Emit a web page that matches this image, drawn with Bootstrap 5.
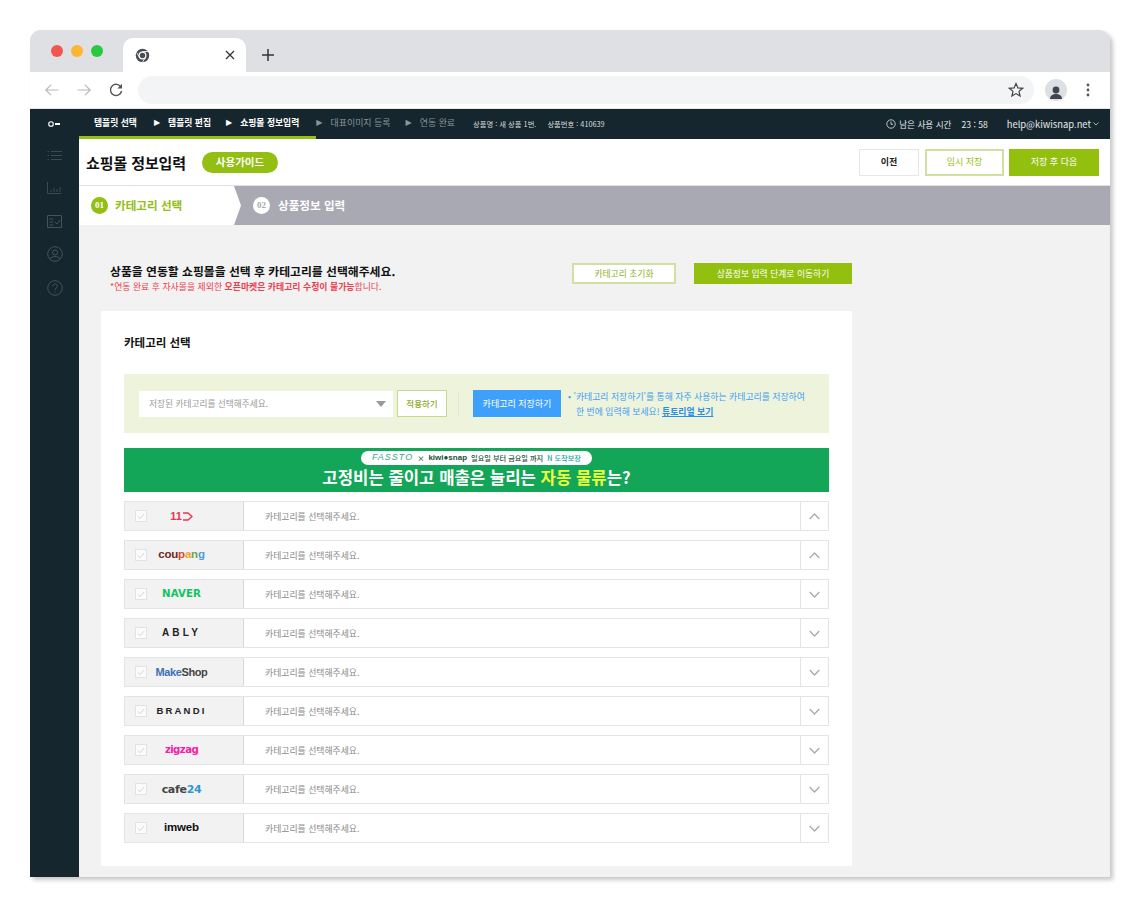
<!DOCTYPE html>
<html lang="ko">
<head>
<meta charset="utf-8">
<title>쇼핑몰 정보입력</title>
<link href="https://cdn.jsdelivr.net/npm/bootstrap@5.3.0/dist/css/bootstrap.min.css" rel="stylesheet">
<style>
html,body{background:#fff;margin:0;height:907px;overflow:hidden}
body{font-family:"Noto Sans CJK KR","Noto Sans",sans-serif;color:#111}
.win{margin:30px 0 0 30px;width:1080px;height:847px;box-shadow:3px 3px 4px rgba(0,0,0,.22);border-radius:11px 11px 0 0;overflow:hidden;background:#f2f2f2}
.tabbar{height:42px;background:#dfe0e4;padding-top:8px}
.lights{width:93px;padding:7px 0 0 21px;gap:8px}
.lights i{display:block;width:12px;height:12px;border-radius:50%}
.ctab{width:123px;height:34px;background:#fff;border-radius:10px 10px 0 0;padding:0 11px 0 12px}
.plus{margin-left:16px;width:12px;height:34px}
.tbar{height:37px;background:#fff;padding:4px 0 5px 15px;border-bottom:1px solid #e8e8ea}
.addr{width:896px;height:28px;background:#f3f4f5;border-radius:14px;margin-left:15px;padding-right:10px}
.avatar{width:22px;height:22px;border-radius:50%;background:#dcdfe4;overflow:hidden;margin-left:11px}
.dark{height:30px;background:#16262e;color:#fff;font-size:8.8px;font-weight:700;padding-right:11px}
.keyc{width:49px}
.stp{height:30px;padding:0 0 0 17px;gap:8px;border-bottom:3px solid #93c00f}
.stp.first{padding-left:15px}
.stp.third{padding-left:15px;padding-right:17px}
.stp.off{border-bottom-color:transparent;color:#8a9499;font-weight:400;font-size:8.95px}
.stp.fourth{padding-left:0}
.stp.fifth{padding-left:15px}
.tri{font-size:8px;line-height:1;font-family:"DejaVu Sans",sans-serif}
.infos{font-size:7.3px;font-weight:400;color:#d8dcde;margin-left:18px;gap:11px}
.topr{font-weight:400;color:#e6e9ea;font-size:8.6px}
.mailx{margin-left:19px;font-size:9.4px}
.side{width:49px;background:#16262e;height:738px;padding-top:9px}
.main{width:1031px;height:738px;overflow:hidden}
.hdr{height:47px;background:#fff;padding:0 11px 0 7px;border-bottom:1px solid #e3e3e3}
.ttl{font-size:15px;font-weight:700;margin:0 16px 0 0;line-height:1;letter-spacing:-.1px}
.pill{background:#93be12;color:#fff;font-size:10.5px;font-weight:700;height:21px;width:76px;border-radius:11px}
.bt{font-size:9px;height:27px;display:flex;align-items:center;justify-content:center;padding:0;border-radius:0}
.bt-w{width:60px;background:#fff;border:1px solid #e6e6e6;color:#222;font-weight:700}
.bt-o{width:79px;background:#fff;border:2px solid #cfe0a0;color:#93be12;margin:0 5px 0 6px}
.bt-g{width:90px;background:#93c00f;color:#fff;border:0}
.stepbar{height:39px;background:#a9a9b3;color:#fff}
.st1{width:162px;height:39px;background:#fff;clip-path:polygon(0 0,155px 0,162px 50%,155px 100%,0 100%);padding-left:12px;color:#93be12;font-size:11.6px;font-weight:700}
.num{width:17px;height:17px;border-radius:50%;font-size:9px;font-weight:700;display:flex;align-items:center;justify-content:center;margin-right:7px;font-family:"Liberation Serif",serif}
.n1{background:#93be12;color:#fff}
.n2{background:#fff;color:#a9a9b3;margin-right:8px}
.st2{padding-left:12px;font-size:11.6px;font-weight:700}
.body-area{width:751px;margin-left:22px;padding-top:36px}
.toprow{height:50px;padding-left:9px}
.h1a{font-size:11.85px;font-weight:700;line-height:20px;margin:0}
.h1b{font-size:8.9px;color:#ef3d4e;line-height:11px;margin:0}
.tb{height:21px;font-size:8.8px;display:flex;align-items:center;justify-content:center;padding:0;border-radius:0;margin-top:2px}
.tb-o{width:104px;background:#fff;border:2px solid #cfe0a0;color:#8fb028;margin-right:18px}
.tb-g{width:158px;background:#93c00f;color:#fff;border:0}
.panel{background:#fff;height:555px;padding:23px 23px 0}
.ptitle{font-size:11.5px;font-weight:700;line-height:17px;margin:0 0 23px}
.savebox{height:59px;background:#eef4dc;padding:0 15px;margin-bottom:15px}
.sel{width:254px;height:26px;background:#fff;font-size:8.7px;color:#999;padding:0 7px 0 10px}
.caret{width:0;height:0;border-left:5px solid transparent;border-right:5px solid transparent;border-top:6px solid #999}
.apply{width:50px;height:27px;background:#fff;border:1.5px solid #c7d98c;color:#8fa828;font-size:8.5px;font-weight:500;display:flex;align-items:center;justify-content:center;margin-left:4px;padding:0;border-radius:0}
.vsep{width:1px;height:26px;background:#e2e8cf;margin:0 14px 0 11px}
.blue{width:88px;height:27px;background:#3fa0fb;color:#fff;font-size:9px;display:flex;align-items:center;justify-content:center;padding:0;border:0;border-radius:0;margin-right:7px}
.hint{font-size:8.85px;color:#3d9df5;line-height:15px;margin:0}
.hint a{color:#2b8fe8;font-weight:700}
.hint span{padding-left:8px}
.banner{height:44px;background:#13a659;color:#fff;margin-bottom:9px;padding-top:3px}
.bpill{height:14px;width:231px;background:#fff;border-radius:7px;font-size:7.2px;color:#1b4f3a;font-weight:500;gap:4px;margin:0 auto}
.bpill b{font-family:"Liberation Sans",sans-serif;font-weight:700;font-size:8px}
.e1{font-style:italic;color:#39a88a;letter-spacing:1px;font-size:9px;font-family:"Liberation Sans",sans-serif}
.bh{font-size:16.7px;font-weight:700;line-height:25px;text-align:center;margin:0}
.bh em{font-style:normal;color:#eaff3a}
.rw{height:30px;margin-bottom:9px;border:1px solid #e4e4e4;background:#fff}
.lc{width:119px;height:28px;background:#f2f2f2;border-right:1px solid #d8d8d8;padding-left:10px;flex:none}
.cb{width:12px;height:12px;background:#fbfbfb;border:1px solid #e2e2e2;flex:none}
.logo{width:65px;text-align:center;margin-left:2px;line-height:1;font-family:"Liberation Sans",sans-serif;font-weight:700;white-space:nowrap}
.ph{flex:1;font-size:8.85px;color:#8a8a8a;padding:1px 0 0 21px}
.rc{width:28px;height:28px;border-left:1px solid #e4e4e4;flex:none}
.l11{color:#e8384f;font-size:11px}
.lcp{font-size:11.5px;color:#6b2a22;letter-spacing:-.2px}
.lcp u{text-decoration:none;color:#d9492f}.lcp s{text-decoration:none;color:#e9a23b}.lcp q{quotes:none;color:#6ba83c}.lcp var{font-style:normal;color:#4c9fd6}
.lnv{color:#10c463;font-size:10.2px;font-weight:700;letter-spacing:.1px;font-family:"DejaVu Sans",sans-serif}
.lab{color:#222;font-size:10px;letter-spacing:3.2px}
.lmk{color:#3f6fba;font-size:11px;letter-spacing:-.4px}.lmk span{color:#444}
.lbr{color:#222;font-size:9.5px;letter-spacing:2.2px}
.lzz{color:#f021a6;font-size:10.2px;font-family:"DejaVu Sans",sans-serif;letter-spacing:-.6px}
.lc24{color:#444;font-size:11px;font-family:"DejaVu Sans",sans-serif;letter-spacing:-.3px}.lc24 span{color:#2f97d4}
.lim{color:#111;font-size:11.5px;letter-spacing:-.2px}
</style>
</head>
<body>
<div class="win">
  <div class="tabbar d-flex">
    <div class="lights d-flex"><i style="background:#f4554f"></i><i style="background:#fdb62f"></i><i style="background:#27c93f"></i></div>
    <div class="ctab d-flex align-items-center justify-content-between">
      <svg width="15" height="15" viewBox="0 0 16 16"><circle cx="8" cy="8" r="7.2" fill="#4a4e52"/><circle cx="8" cy="8" r="4.2" fill="#fff"/><circle cx="8" cy="8" r="2.9" fill="#4a4e52"/><path d="M8 3.8h6.400M5.200 10.600 1.900 5M10.900 10.600 7.600 15.600" stroke="#fff" stroke-width=".9" fill="none"/></svg>
      <svg width="10" height="10" viewBox="0 0 10 10"><path d="M1 1l8 8M9 1l-8 8" stroke="#333" stroke-width="1.3"/></svg>
    </div>
    <div class="plus d-flex align-items-center"><svg width="12" height="12" viewBox="0 0 12 12"><path d="M6 0v12M0 6h12" stroke="#333" stroke-width="1.5"/></svg></div>
  </div>
  <div class="tbar d-flex align-items-center">
    <svg width="14" height="12" viewBox="0 0 14 12"><path d="M13.5 6H1M6 .8.8 6 6 11.2" stroke="#b4b7bb" stroke-width="1.2" fill="none"/></svg>
    <svg style="margin-left:18px" width="14" height="12" viewBox="0 0 14 12"><path d="M.5 6H13M8 .8 13.2 6 8 11.2" stroke="#b4b7bb" stroke-width="1.2" fill="none"/></svg>
    <svg style="margin-left:18px" width="14" height="14" viewBox="0 0 14 14"><path d="M12 4.200A5.600 5.600 0 1 0 12.600 8" stroke="#555" stroke-width="1.400" fill="none"/><path d="M13 .8v4.600H8.400z" fill="#555"/></svg>
    <div class="addr d-flex align-items-center justify-content-end">
      <svg width="16" height="16" viewBox="0 0 16 16"><path d="M8 1.600l1.900 4.300 4.700.4-3.600 3.100 1.100 4.600L8 11.600 3.900 14l1.100-4.600L1.400 6.300l4.700-.4z" stroke="#444" stroke-width="1.200" fill="none"/></svg>
    </div>
    <div class="avatar"><svg width="22" height="22" viewBox="0 0 22 22"><circle cx="11" cy="8" r="3.400" fill="#3f4650"/><path d="M5 17c0-3.400 2.700-5 6-5s6 1.600 6 5z" fill="#3f4650"/></svg></div>
    <svg style="margin-left:19px" width="4" height="14" viewBox="0 0 4 14"><circle cx="2" cy="2" r="1.400" fill="#555"/><circle cx="2" cy="7" r="1.400" fill="#555"/><circle cx="2" cy="12" r="1.400" fill="#555"/></svg>
  </div>
  <div class="dark d-flex align-items-center">
    <div class="keyc d-flex justify-content-center"><svg width="13" height="8" viewBox="0 0 13 8"><circle cx="3" cy="4" r="2.300" fill="none" stroke="#fff" stroke-width="1.100"/><path d="M7 4h5" stroke="#fff" stroke-width="2"/></svg></div>
    <div class="stp first d-flex align-items-center">템플릿 선택</div>
    <div class="stp d-flex align-items-center"><span class="tri">▶</span>템플릿 편집</div>
    <div class="stp third d-flex align-items-center"><span class="tri">▶</span>쇼핑몰 정보입력</div>
    <div class="stp off fourth d-flex align-items-center"><span class="tri">▶</span>대표이미지 등록</div>
    <div class="stp off fifth d-flex align-items-center"><span class="tri">▶</span>연동 완료</div>
    <div class="infos d-flex"><span>상품명 : 새 상품 1번.</span><span>상품번호 : 410639</span></div>
    <div class="topr ms-auto d-flex align-items-center">
      <svg width="10" height="10" viewBox="0 0 10 10" style="margin-right:3px"><circle cx="5" cy="5" r="4.200" fill="none" stroke="#e6e9ea" stroke-width=".8"/><path d="M5 2.500V5.300H7" stroke="#e6e9ea" stroke-width=".8" fill="none"/></svg>
      <span>남은 사용 시간</span><span style="margin-left:10px">23 : 58</span><span class="mailx">help@kiwisnap.net</span>
      <svg width="6" height="4" viewBox="0 0 6 4" style="margin-left:2px"><path d="M.5.500 3 3 5.500.500" stroke="#cfd4d6" stroke-width=".8" fill="none"/></svg>
    </div>
  </div>
  <div class="d-flex">
    <div class="side d-flex flex-column align-items-center">
      <svg width="15" height="15" viewBox="0 0 15 15"><path d="M4 3.500h11M4 7.500h11M4 11.500h11M.5 3.500h1.500M.5 7.500h1.500M.5 11.500h1.500" stroke="#3c4a51" stroke-width="1" fill="none"/></svg>
      <svg width="15" height="17" viewBox="0 0 15 17" style="margin-top:16px"><path d="M.5 3v11.500h14M4 13v-2M7 13V9M10 13v-3M13 13V8" stroke="#3c4a51" stroke-width="1" fill="none"/></svg>
      <svg width="15" height="16" viewBox="0 0 15 14" style="margin-top:18px"><path d="M.5.500h14v12H.5zM2.500 4H6M2.500 7H6M2.500 10H6M8 7l2 2 3-4" stroke="#465359" stroke-width="1" fill="none"/></svg>
      <svg width="16" height="16" viewBox="0 0 16 16" style="margin-top:16px"><circle cx="8" cy="8" r="7.300" fill="none" stroke="#465359"/><circle cx="8" cy="6.500" r="2.500" fill="none" stroke="#465359"/><path d="M3 12.500c2-2.500 8-2.500 10 0" fill="none" stroke="#465359"/></svg>
      <svg width="16" height="16" viewBox="0 0 16 16" style="margin-top:18px"><circle cx="8" cy="8" r="7.300" fill="none" stroke="#465359"/><path d="M5.800 6.200c0-3 4.500-3 4.500 0 0 1.800-2.300 1.800-2.300 3.800M8 11.300v1.200" fill="none" stroke="#465359"/></svg>
    </div>
    <div class="main">
      <div class="hdr d-flex align-items-center">
        <h1 class="ttl">쇼핑몰 정보입력</h1>
        <div class="pill d-flex align-items-center justify-content-center">사용가이드</div>
        <div class="ms-auto d-flex">
          <button class="btn bt bt-w">이전</button><button class="btn bt bt-o">임시 저장</button><button class="btn bt bt-g">저장 후 다음</button>
        </div>
      </div>
      <div class="stepbar d-flex">
        <div class="st1 d-flex align-items-center"><span class="num n1">01</span>카테고리 선택</div>
        <div class="st2 d-flex align-items-center"><span class="num n2">02</span>상품정보 입력</div>
      </div>
      <div class="body-area">
        <div class="toprow d-flex align-items-start justify-content-between">
          <div><p class="h1a">상품을 연동할 쇼핑몰을 선택 후 카테고리를 선택해주세요.</p><p class="h1b">*연동 완료 후 자사몰을 제외한 <b>오픈마켓은 카테고리 수정이 불가능</b>합니다.</p></div>
          <div class="d-flex"><button class="btn tb tb-o">카테고리 초기화</button><button class="btn tb tb-g">상품정보 입력 단계로 이동하기</button></div>
        </div>
        <div class="panel">
          <h2 class="ptitle">카테고리 선택</h2>
          <div class="savebox d-flex align-items-center">
            <div class="sel d-flex align-items-center justify-content-between"><span>저장된 카테고리를 선택해주세요.</span><i class="caret"></i></div>
            <button class="btn apply">적용하기</button>
            <i class="vsep"></i>
            <button class="btn blue">카테고리 저장하기</button>
            <p class="hint">• '카테고리 저장하기'를 통해 자주 사용하는 카테고리를 저장하여<br><span>한 번에 입력해 보세요! <a href="#">튜토리얼 보기</a></span></p>
          </div>
          <div class="banner">
            <div class="bpill d-flex align-items-center justify-content-center"><span class="e1">FASSTO</span><span>×</span><b>kiwi●snap</b><span>일요일 부터 금요일 까지</span><span style="color:#1aa5a0">N 도착보장</span></div>
            <p class="bh">고정비는 줄이고 매출은 늘리는 <em>자동 물류</em>는?</p>
          </div>

          <div class="rw d-flex align-items-center"><div class="lc d-flex align-items-center"><span class="cb d-flex align-items-center justify-content-center"><svg width="8" height="7" viewBox="0 0 8 7"><path d="M.8 3.500 3 5.700 7.200 1" stroke="#d4d4d4" fill="none"/></svg></span><span class="logo l11">11<svg width="11" height="9" viewBox="0 0 11 9"><path d="M1 1h5l4 3.500L6 8H1" stroke="#e8384f" stroke-width="1.400" fill="none"/></svg></span></div><div class="ph">카테고리를 선택해주세요.</div><div class="rc d-flex align-items-center justify-content-center"><svg width="11" height="7" viewBox="0 0 11 7"><path d="M.7 6 5.500 1l4.800 5" stroke="#aaa" stroke-width="1.300" fill="none"/></svg></div></div>

          <div class="rw d-flex align-items-center"><div class="lc d-flex align-items-center"><span class="cb d-flex align-items-center justify-content-center"><svg width="8" height="7" viewBox="0 0 8 7"><path d="M.8 3.500 3 5.700 7.200 1" stroke="#d4d4d4" fill="none"/></svg></span><span class="logo lcp">cou<u>p</u><s>a</s><q>n</q><var>g</var></span></div><div class="ph">카테고리를 선택해주세요.</div><div class="rc d-flex align-items-center justify-content-center"><svg width="11" height="7" viewBox="0 0 11 7"><path d="M.7 6 5.500 1l4.800 5" stroke="#aaa" stroke-width="1.300" fill="none"/></svg></div></div>

          <div class="rw d-flex align-items-center"><div class="lc d-flex align-items-center"><span class="cb d-flex align-items-center justify-content-center"><svg width="8" height="7" viewBox="0 0 8 7"><path d="M.8 3.500 3 5.700 7.200 1" stroke="#d4d4d4" fill="none"/></svg></span><span class="logo lnv">NAVER</span></div><div class="ph">카테고리를 선택해주세요.</div><div class="rc d-flex align-items-center justify-content-center"><svg width="11" height="7" viewBox="0 0 11 7"><path d="M.7 1 5.500 6l4.800-5" stroke="#aaa" stroke-width="1.300" fill="none"/></svg></div></div>

          <div class="rw d-flex align-items-center"><div class="lc d-flex align-items-center"><span class="cb d-flex align-items-center justify-content-center"><svg width="8" height="7" viewBox="0 0 8 7"><path d="M.8 3.500 3 5.700 7.200 1" stroke="#d4d4d4" fill="none"/></svg></span><span class="logo lab">ABLY</span></div><div class="ph">카테고리를 선택해주세요.</div><div class="rc d-flex align-items-center justify-content-center"><svg width="11" height="7" viewBox="0 0 11 7"><path d="M.7 1 5.500 6l4.800-5" stroke="#aaa" stroke-width="1.300" fill="none"/></svg></div></div>

          <div class="rw d-flex align-items-center"><div class="lc d-flex align-items-center"><span class="cb d-flex align-items-center justify-content-center"><svg width="8" height="7" viewBox="0 0 8 7"><path d="M.8 3.500 3 5.700 7.200 1" stroke="#d4d4d4" fill="none"/></svg></span><span class="logo lmk">Make<span>Shop</span></span></div><div class="ph">카테고리를 선택해주세요.</div><div class="rc d-flex align-items-center justify-content-center"><svg width="11" height="7" viewBox="0 0 11 7"><path d="M.7 1 5.500 6l4.800-5" stroke="#aaa" stroke-width="1.300" fill="none"/></svg></div></div>

          <div class="rw d-flex align-items-center"><div class="lc d-flex align-items-center"><span class="cb d-flex align-items-center justify-content-center"><svg width="8" height="7" viewBox="0 0 8 7"><path d="M.8 3.500 3 5.700 7.200 1" stroke="#d4d4d4" fill="none"/></svg></span><span class="logo lbr">BRANDI</span></div><div class="ph">카테고리를 선택해주세요.</div><div class="rc d-flex align-items-center justify-content-center"><svg width="11" height="7" viewBox="0 0 11 7"><path d="M.7 1 5.500 6l4.800-5" stroke="#aaa" stroke-width="1.300" fill="none"/></svg></div></div>

          <div class="rw d-flex align-items-center"><div class="lc d-flex align-items-center"><span class="cb d-flex align-items-center justify-content-center"><svg width="8" height="7" viewBox="0 0 8 7"><path d="M.8 3.500 3 5.700 7.200 1" stroke="#d4d4d4" fill="none"/></svg></span><span class="logo lzz">zigzag</span></div><div class="ph">카테고리를 선택해주세요.</div><div class="rc d-flex align-items-center justify-content-center"><svg width="11" height="7" viewBox="0 0 11 7"><path d="M.7 1 5.500 6l4.800-5" stroke="#aaa" stroke-width="1.300" fill="none"/></svg></div></div>

          <div class="rw d-flex align-items-center"><div class="lc d-flex align-items-center"><span class="cb d-flex align-items-center justify-content-center"><svg width="8" height="7" viewBox="0 0 8 7"><path d="M.8 3.500 3 5.700 7.200 1" stroke="#d4d4d4" fill="none"/></svg></span><span class="logo lc24">cafe<span>24</span></span></div><div class="ph">카테고리를 선택해주세요.</div><div class="rc d-flex align-items-center justify-content-center"><svg width="11" height="7" viewBox="0 0 11 7"><path d="M.7 1 5.500 6l4.800-5" stroke="#aaa" stroke-width="1.300" fill="none"/></svg></div></div>

          <div class="rw d-flex align-items-center"><div class="lc d-flex align-items-center"><span class="cb d-flex align-items-center justify-content-center"><svg width="8" height="7" viewBox="0 0 8 7"><path d="M.8 3.500 3 5.700 7.200 1" stroke="#d4d4d4" fill="none"/></svg></span><span class="logo lim">imweb</span></div><div class="ph">카테고리를 선택해주세요.</div><div class="rc d-flex align-items-center justify-content-center"><svg width="11" height="7" viewBox="0 0 11 7"><path d="M.7 1 5.500 6l4.800-5" stroke="#aaa" stroke-width="1.300" fill="none"/></svg></div></div>
        </div>
      </div>
    </div>
  </div>
</div>
<script src="https://cdn.jsdelivr.net/npm/bootstrap@5.3.0/dist/js/bootstrap.bundle.min.js"></script>
</body>
</html>
